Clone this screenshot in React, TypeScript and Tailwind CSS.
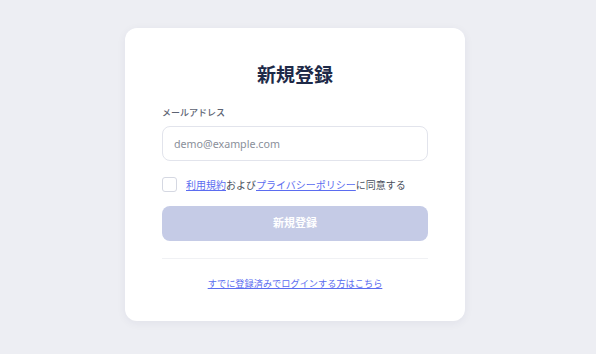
import { useState } from "react";

export default function App() {
  const [email, setEmail] = useState("");
  const [agreed, setAgreed] = useState(false);

  return (
    <div
      className="flex min-h-screen items-center justify-center bg-[#edeef3] pr-[6px] pb-[5px]"
      style={{ fontFamily: '"Noto Sans", "Noto Sans CJK JP", sans-serif' }}
    >
      <div className="w-[340px] rounded-[12px] bg-white px-[37px] pt-[35px] pb-[30px] shadow-[0_2px_10px_rgba(30,40,80,0.06)]">
        <h1 className="text-center text-[19px] leading-[24px] font-bold text-[#1e2a48]">
          新規登録
        </h1>
        <label className="mt-[19px] mb-[6px] block text-[9px] leading-[14px] font-medium text-[#5c6373]">
          メールアドレス
        </label>
        <input
          type="email"
          value={email}
          onChange={(e) => setEmail(e.target.value)}
          placeholder="demo@example.com"
          className="h-[35px] w-full rounded-[8px] border border-[#e2e4ec] bg-white px-[11px] text-[10.7px] text-[#333] placeholder:text-[#8a8f9a] focus:outline-none"
        />
        <label className="mt-[16px] flex items-center text-[10px] leading-[14px] text-[#4a4f5c]">
          <input
            type="checkbox"
            checked={agreed}
            onChange={(e) => setAgreed(e.target.checked)}
            className="mr-[9px] h-[15px] w-[15px] appearance-none rounded-[3px] border border-[#d5d8e2] bg-white"
          />
          <a href="#" className="text-[#5b6cf0] underline">
            利用規約
          </a>
          および
          <a href="#" className="text-[#5b6cf0] underline">
            プライバシーポリシー
          </a>
          に同意する
        </label>
        <button
          type="submit"
          disabled={!agreed || !email}
          className="mt-[14px] h-[35px] w-full rounded-[8px] bg-[#c5cbe6] text-[11px] font-bold text-white"
        >
          新規登録
        </button>
        <div className="mt-[17px] h-px bg-[#f0f1f4]" />
        <p className="mt-[18px] text-center text-[9.2px] leading-[14px]">
          <a href="#" className="text-[#5b6cf0] underline">
            すでに登録済みでログインする方はこちら
          </a>
        </p>
      </div>
    </div>
  );
}
